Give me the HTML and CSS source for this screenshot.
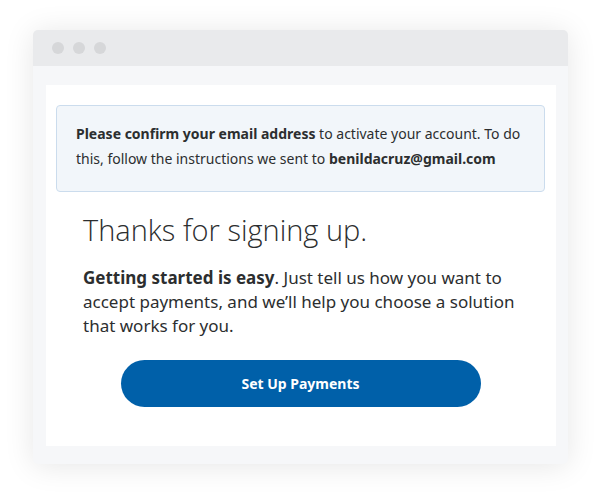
FILE: index.html
```html
<!DOCTYPE html>
<html lang="en">
<head>
<meta charset="utf-8">
<title>Thanks for signing up</title>
<link rel="stylesheet" href="styles.css">
</head>
<body>
<div class="stage">
  <div class="window">
    <div class="titlebar">
      <span class="dot"></span><span class="dot"></span><span class="dot"></span>
    </div>
    <div class="viewport">
      <div class="panel">
        <div class="alert">
          <b>Please confirm your email address</b> to activate your account. To do this, follow the instructions we sent to <b>benildacruz@gmail.com</b>
        </div>
        <div class="content">
          <h1 class="title">Thanks for signing up.</h1>
          <p class="lead"><b>Getting started is easy</b>. Just tell us how you want to accept payments, and we’ll help you choose a solution that works for you.</p>
          <div class="actions">
            <button class="btn" type="button">Set Up Payments</button>
          </div>
        </div>
      </div>
    </div>
  </div>
</div>
</body>
</html>
```
FILE: styles.css
```css
* { box-sizing: border-box; }
html, body { margin: 0; padding: 0; background: #ffffff; }
body { font-family: "Noto Sans", "Open Sans", sans-serif; color: #2c2e2f; }

.stage { padding: 30px 32px 32px 33px; }

.window {
  width: 535px;
  height: 434px;
  border-radius: 5px;
  background: #f6f7f9;
  box-shadow: 0 2px 30px rgba(0, 0, 0, 0.10);
  overflow: hidden;
  display: flex;
  flex-direction: column;
}

.titlebar {
  height: 36px;
  background: #e9eaec;
  display: flex;
  align-items: center;
  gap: 9px;
  padding-left: 19px;
  flex: none;
}
.dot { width: 12px; height: 12px; border-radius: 50%; background: #d6d7d9; }

.viewport { flex: 1; padding: 19px 12px 18px 13px; display: flex; }

.panel {
  flex: 1;
  background: #ffffff;
  padding: 20px 11px 0 10px;
}

.alert {
  background: #f2f6fa;
  border: 1px solid #cbdced;
  border-radius: 4px;
  padding: 15px 19px 20px 19px;
  font-size: 14px;
  line-height: 25px;
  color: #2c2e2f;
}
.alert b { font-weight: 700; }

.content { padding: 0 27px; }

.title {
  margin: 20px 0 0 0;
  font-family: "Open Sans", "Noto Sans", sans-serif;
  font-weight: 300;
  font-size: 29px;
  line-height: 36px;
  color: #2c2e2f;
}

.lead {
  margin: 18px 0 0 0;
  font-size: 17px;
  line-height: 24px;
  color: #2c2e2f;
}
.lead b { font-weight: 700; }

.actions { display: flex; justify-content: center; margin-top: 22px; }

.btn {
  width: 360px;
  height: 47px;
  border: none;
  border-radius: 24px;
  background: #0060a9;
  color: #ffffff;
  font-family: "Noto Sans", "Open Sans", sans-serif;
  font-weight: 700;
  font-size: 14px;
  cursor: pointer;
}
```
